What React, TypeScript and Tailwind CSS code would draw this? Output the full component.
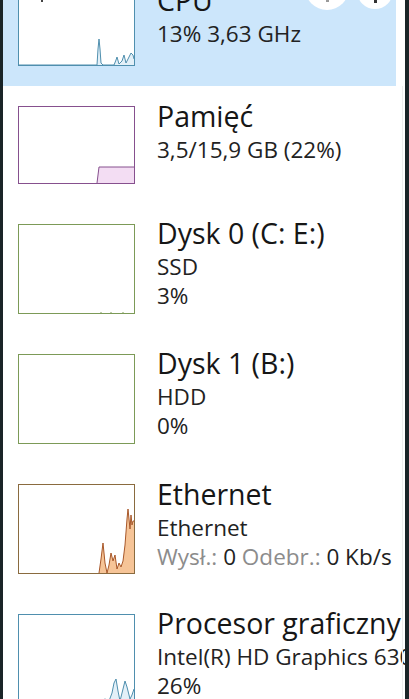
import React from "react";

type Tile = {
  title: string;
  lines: React.ReactNode[];
  border: string;
  h: number;
  textTop: number;
  selected?: boolean;
  graph: React.ReactNode;
};

const font = { fontFamily: '"Open Sans", "Noto Sans", sans-serif' };

function Box({ border, h, children }: { border: string; h: number; children?: React.ReactNode }) {
  return (
    <div
      className="w-[117px] shrink-0 bg-white border"
      style={{ borderColor: border, height: h }}
    >
      <svg width="100%" height="100%" viewBox={`0 0 115 ${h - 2}`} preserveAspectRatio="none">
        {children}
      </svg>
    </div>
  );
}

export default function App() {
  const tiles: Tile[] = [
    {
      title: "CPU",
      lines: ["13%  3,63 GHz"],
      border: "#4f8fae",
      h: 90,
      textTop: 7,
      selected: true,
      graph: (
        <>
          <polygon
            points="0,88 78,88 79,72 80,62 81,72 82,86 84,88 95,88 97,83 98,80 100,87 103,84 105,78 107,86 110,80 112,76 114,78 115,82 115,88"
            fill="#e3f0f8"
          />
          <polyline
            points="0,88 78,88 79,72 80,62 81,72 82,86 84,88 95,88 97,83 98,80 100,87 103,84 105,78 107,86 110,80 112,76 114,78 115,82"
            fill="none"
            stroke="#4f8fae"
            strokeWidth="1"
          />
        </>
      ),
    },
    {
      title: "Pamięć",
      lines: ["3,5/15,9 GB (22%)"],
      border: "#86508e",
      h: 78,
      textTop: -7,
      graph: (
        <>
          <polygon points="78,76 80,60 115,60 115,76" fill="#f3ddf3" />
          <polyline points="78,76 80,60 115,60" fill="none" stroke="#86508e" strokeWidth="1" />
        </>
      ),
    },
    {
      title: "Dysk 0 (C: E:)",
      lines: ["SSD", "3%"],
      border: "#7c9a57",
      h: 90,
      textTop: -8,
      graph: (
        <>
          <line x1="82" y1="87" x2="82" y2="88" stroke="#7c9a57" />
          <line x1="92" y1="87" x2="92" y2="88" stroke="#7c9a57" />
          <line x1="104" y1="87" x2="104" y2="88" stroke="#7c9a57" />
        </>
      ),
    },
    {
      title: "Dysk 1 (B:)",
      lines: ["HDD", "0%"],
      border: "#7c9a57",
      h: 90,
      textTop: -8,
      graph: null,
    },
    {
      title: "Ethernet",
      lines: [
        "Ethernet",
        <span key="w">
          <span className="text-[#8c8c8c]">Wysł.: </span>0{" "}
          <span className="text-[#8c8c8c]">Odebr.: </span>0 Kb/s
        </span>,
      ],
      border: "#8a6b3f",
      h: 90,
      textTop: -7,
      graph: (
        <>
          <polygon
            points="80,88 82,74 84,58 86,78 88,88 90,80 92,68 94,76 96,70 98,84 100,78 102,82 104,76 106,60 108,34 109,24 110,34 111,44 112,30 113,40 114,36 115,36 115,88"
            fill="#f6c497"
          />
          <polyline
            points="80,88 82,74 84,58 86,78 88,88 90,80 92,68 94,76 96,70 98,84 100,78 102,82 104,76 106,60 108,34 109,24 110,34 111,44 112,30 113,40 114,36 115,36"
            fill="none"
            stroke="#a8582a"
            strokeWidth="1"
          />
        </>
      ),
    },
    {
      title: "Procesor graficzny",
      lines: ["Intel(R) HD Graphics 630", "26%"],
      border: "#4f8fae",
      h: 90,
      textTop: -8,
      graph: (
        <>
          <polygon
            points="78,88 82,86 86,84 90,86 93,78 95,68 97,64 99,76 101,86 103,78 106,66 108,72 111,84 113,80 115,74 115,88"
            fill="#e3f0f8"
          />
          <polyline
            points="0,88 78,88 82,86 86,84 90,86 93,78 95,68 97,64 99,76 101,86 103,78 106,66 108,72 111,84 113,80 115,74"
            fill="none"
            stroke="#4f8fae"
            strokeWidth="1"
          />
        </>
      ),
    },
  ];

  return (
    <div className="w-[409px] h-[699px] flex bg-[#1a2427] overflow-hidden" style={font}>
      <div className="w-[3px] shrink-0" />
      <div className="relative flex-1 bg-white overflow-hidden">
        <div className="-mt-[44px] flex flex-col">
          {tiles.map((t) => (
            <div
              key={t.title}
              className={`w-[393px] flex items-start pl-[15px] py-[20px] ${t.selected ? "bg-[#cce6fb]" : ""}`}
            >
              <Box border={t.border} h={t.h}>
                {t.graph}
              </Box>
              <div className="ml-[22px] flex flex-col whitespace-nowrap" style={{ marginTop: t.textTop }}>
                <div className="text-[28.5px] leading-[34px] text-[#161616]">{t.title}</div>
                <div className="mt-[2px] flex flex-col">
                  {t.lines.map((l, i) => (
                    <div key={i} className="text-[22.5px] leading-[29px] text-[#222]">
                      {l}
                    </div>
                  ))}
                </div>
              </div>
            </div>
          ))}
        </div>
        <div className="absolute top-[-34px] left-[302px] w-[44px] h-[44px] rounded-full bg-white flex items-end justify-center">
          <div className="w-[3px] h-[2px] mb-[8px] bg-[#9a9a9a]" />
        </div>
        <div className="absolute top-[-27px] left-[354px] w-[36px] h-[36px] rounded-full bg-white flex items-end justify-center">
          <div className="w-[3px] h-[3px] mb-[6px] bg-[#333]" />
        </div>
        <div className="absolute top-0 left-[38px] w-[2px] h-[2px] bg-[#444]" />
        <div className="absolute top-[86px] bottom-0 right-[2px] w-px bg-[#ededed]" />
      </div>
      <div className="w-[4px] shrink-0" />
    </div>
  );
}
